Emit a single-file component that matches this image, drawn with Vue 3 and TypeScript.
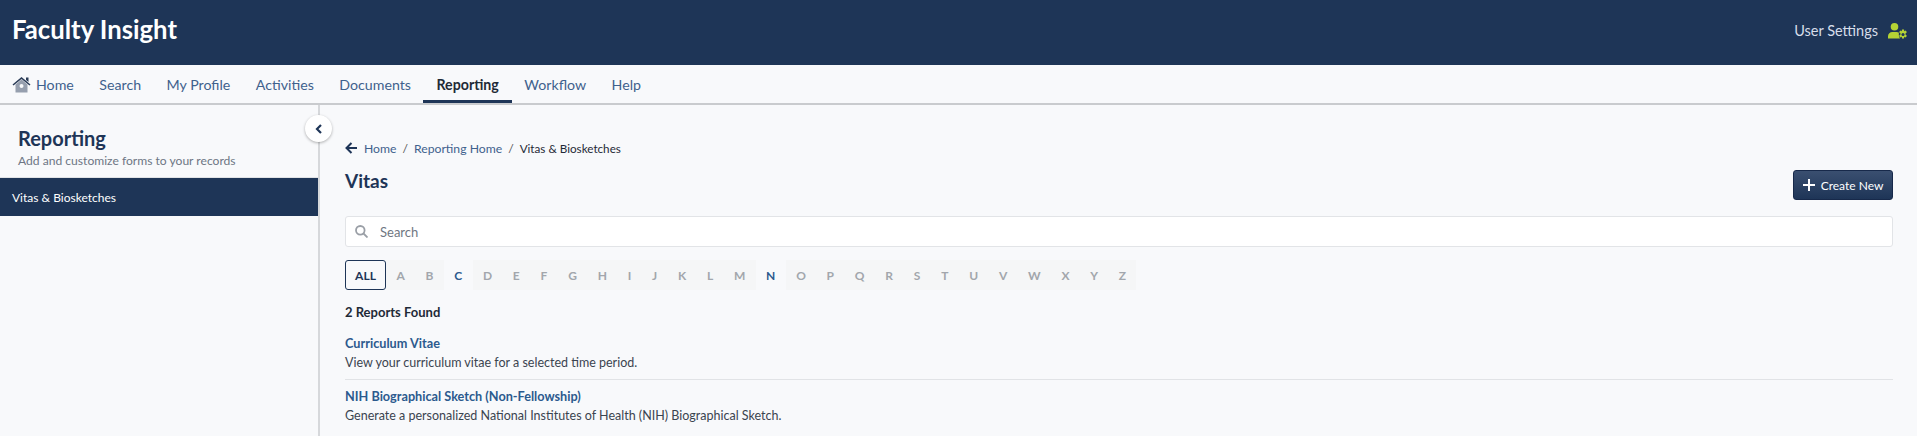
<script setup lang="ts">
const navItems = ['Search', 'My Profile', 'Activities', 'Documents', 'Reporting', 'Workflow', 'Help']
const letters = 'ABCDEFGHIJKLMNOPQRSTUVWXYZ'.split('')
const enabled = ['C', 'N']
const reports = [
  { title: 'Curriculum Vitae', text: 'View your curriculum vitae for a selected time period.' },
  {
    title: 'NIH Biographical Sketch (Non-Fellowship)',
    text: 'Generate a personalized National Institutes of Health (NIH) Biographical Sketch.'
  }
]
</script>

<template>
  <div class="page">
    <header class="top">
      <div class="brand">Faculty Insight</div>
      <div class="user">
        <span>User Settings</span>
        <svg width="20" height="16" viewBox="0 0 20 16" fill="#b5d334">
          <circle cx="6.5" cy="3.8" r="3.8" />
          <path d="M0 15.5v-2.2C0 10.8 2 9 4.4 9h4.2c.9 0 1.7.2 2.4.7-.5 1.7-.1 3.9 1 5.8z" />
          <path d="M14 6.6h2l.3 1.6 1.5-.8 1.1 1.8-1.3 1v1.6l1.3 1-1.1 1.8-1.5-.8-.3 1.6h-2l-.3-1.6-1.5.8-1.1-1.8 1.3-1v-1.6l-1.3-1 1.1-1.8 1.5.8z" />
          <circle cx="15" cy="11.5" r="1.5" fill="#1e3557" />
        </svg>
      </div>
    </header>

    <nav class="nav">
      <a class="nav-link home">
        <svg width="19" height="17" viewBox="0 0 19 17">
          <path d="M3.5 8.5 9.5 3.5l6 5v8h-12z" fill="#969fae" />
          <circle cx="9.5" cy="10" r="2" fill="#f8f9fb" />
          <path d="M0.5 8.5 9.5 1l9 7.5-1 1-8-6.6-8 6.6z" fill="#2b3c57" />
          <path d="M14 1.5h2.5V6L14 4z" fill="#2b3c57" />
        </svg>
        Home
      </a>
      <a v-for="item in navItems" :key="item" class="nav-link" :class="{ active: item === 'Reporting' }">{{ item }}</a>
    </nav>

    <div class="body">
      <aside class="side">
        <div class="side-head">
          <h2>Reporting</h2>
          <p>Add and customize forms to your records</p>
        </div>
        <div class="side-item">Vitas &amp; Biosketches</div>
        <button class="collapse">
          <svg width="8" height="10" viewBox="0 0 8 10" fill="none" stroke="#1e3557" stroke-width="2.2">
            <path d="M6 1 2 5l4 4" />
          </svg>
        </button>
      </aside>

      <main class="main">
        <div class="crumbs">
          <svg class="back" width="13" height="12" viewBox="0 0 13 12" fill="none" stroke="#1e3557" stroke-width="2">
            <path d="M12 6H2M6.5 1 1.5 6l5 5" />
          </svg>
          <a>Home</a>
          <span class="sep">/</span>
          <a>Reporting Home</a>
          <span class="sep">/</span>
          <span class="here">Vitas &amp; Biosketches</span>
        </div>

        <div class="title-row">
          <h1>Vitas</h1>
          <button class="create">
            <svg width="12" height="12" viewBox="0 0 12 12" stroke="#fff" stroke-width="2">
              <path d="M6 0v12M0 6h12" />
            </svg>
            Create New
          </button>
        </div>

        <div class="search">
          <svg width="13" height="13" viewBox="0 0 13 13" fill="none" stroke="#9a9fa6" stroke-width="1.8">
            <circle cx="5.3" cy="5.3" r="4.3" />
            <path d="m8.5 8.5 4 4" />
          </svg>
          <span>Search</span>
        </div>

        <div class="letters">
          <span class="letter all">ALL</span>
          <span
            v-for="l in letters"
            :key="l"
            class="letter"
            :class="{ on: enabled.includes(l) }"
          >{{ l }}</span>
        </div>

        <div class="found">2 Reports Found</div>

        <div v-for="r in reports" :key="r.title" class="report">
          <a>{{ r.title }}</a>
          <p>{{ r.text }}</p>
        </div>
      </main>
    </div>
  </div>
</template>

<style>
html,
body {
  margin: 0;
  background: #f8f9fb;
}
</style>

<style scoped>
.page {
  height: 436px;
  overflow: hidden;
  font-family: Lato, 'Noto Sans', sans-serif;
  color: #1f2a37;
}

.top {
  height: 65px;
  background: #1e3557;
  display: flex;
  justify-content: space-between;
  padding: 0 9px 0 12px;
  align-items: flex-start;
}

.brand {
  color: #fff;
  font-size: 25.7px;
  font-weight: 700;
  margin-top: 14px;
}

.user {
  display: flex;
  align-items: center;
  gap: 10px;
  color: #d7deea;
  font-size: 14.5px;
  margin-top: 22px;
}

.nav {
  height: 38px;
  display: flex;
  padding-left: 12px;
  gap: 25.5px;
  border-bottom: 2px solid #c9cbce;
}

.nav-link {
  display: flex;
  align-items: center;
  gap: 5px;
  color: #3f618d;
  font-size: 14.2px;
  height: 100%;
  position: relative;
}

.active {
  color: #1f2a37;
  font-weight: 700;
}

.active::after {
  content: '';
  position: absolute;
  left: -13px;
  right: -13px;
  bottom: 0;
  height: 3px;
  background: #1e3557;
}

.body {
  display: flex;
}

.side {
  width: 318px;
  height: 331px;
  flex: none;
  border-right: 2px solid #d6d8db;
  position: relative;
}

.side-head {
  padding: 21px 0 0 18px;
  height: 73px;
  box-sizing: border-box;
  border-bottom: 1px solid #e1e3e6;
}

.side-head h2 {
  margin: 0;
  font-size: 20px;
  font-weight: 700;
  color: #1e3557;
  line-height: 24px;
}

.side-head p {
  margin: 3px 0 0;
  font-size: 12.1px;
  color: #6d7684;
}

.side-item {
  height: 38px;
  background: #1e3557;
  color: #fff;
  font-size: 12px;
  line-height: 39px;
  padding-left: 12px;
}

.collapse {
  position: absolute;
  top: 10px;
  right: -14px;
  width: 27px;
  height: 27px;
  padding: 0;
  border: none;
  border-radius: 50%;
  background: #fff;
  box-shadow: 0 1px 3px rgba(0, 0, 0, 0.3);
  display: flex;
  align-items: center;
  justify-content: center;
}

.main {
  flex: 1;
  padding: 34px 24px 0 25px;
  min-width: 0;
}

.crumbs {
  display: flex;
  align-items: center;
  height: 18px;
  font-size: 12.2px;
  color: #3f618d;
}

.back {
  margin-right: 6px;
}

.sep {
  margin: 0 6px;
  color: #555;
}

.here {
  color: #1f2a37;
  font-size: 11.7px;
}

.title-row {
  display: flex;
  justify-content: space-between;
  align-items: flex-start;
  margin-top: 11px;
}

.title-row h1 {
  margin: 0;
  font-size: 19px;
  font-weight: 700;
  color: #1e3557;
  line-height: 26px;
}

.create {
  width: 100px;
  height: 30px;
  margin-top: 2px;
  display: flex;
  align-items: center;
  justify-content: center;
  gap: 6px;
  padding: 0;
  border: 1px solid #17294a;
  border-radius: 3px;
  background: linear-gradient(#3a4f70, #1e3557);
  color: #fff;
  font-family: inherit;
  font-size: 12px;
}

.search {
  margin-top: 16px;
  height: 31px;
  box-sizing: border-box;
  background: #fff;
  border: 1px solid #e2e4e7;
  border-radius: 3px;
  display: flex;
  align-items: center;
  gap: 12px;
  padding-left: 9px;
  color: #6f7782;
  font-size: 13px;
}

.letters {
  display: flex;
  margin-top: 13px;
  height: 30px;
}

.letter {
  padding: 0 10.4px;
  display: flex;
  align-items: center;
  justify-content: center;
  font-size: 12px;
  font-weight: 700;
  color: #a2a6ac;
  background: #f5f6f7;
}

.letter.on {
  color: #2c5a8e;
  background: none;
}

.letter.all {
  width: 41px;
  padding: 0;
  box-sizing: border-box;
  background: #fff0;
  border: 1px solid #1e3557;
  border-radius: 3px;
  color: #1e3557;
}

.found {
  margin-top: 13px;
  font-size: 13px;
  font-weight: 700;
  color: #1f2a37;
  line-height: 18px;
}

.report {
  margin-top: 13px;
  padding-bottom: 7px;
}

.report + .report {
  border-top: 1px solid #e1e3e6;
  margin-top: 0;
  padding-top: 7px;
}

.report a {
  display: block;
  font-size: 12.7px;
  font-weight: 700;
  color: #2c5a8e;
  line-height: 18px;
}

.report p {
  margin: 2px 0 0;
  font-size: 12.5px;
  color: #3b4450;
  line-height: 18px;
}
</style>
